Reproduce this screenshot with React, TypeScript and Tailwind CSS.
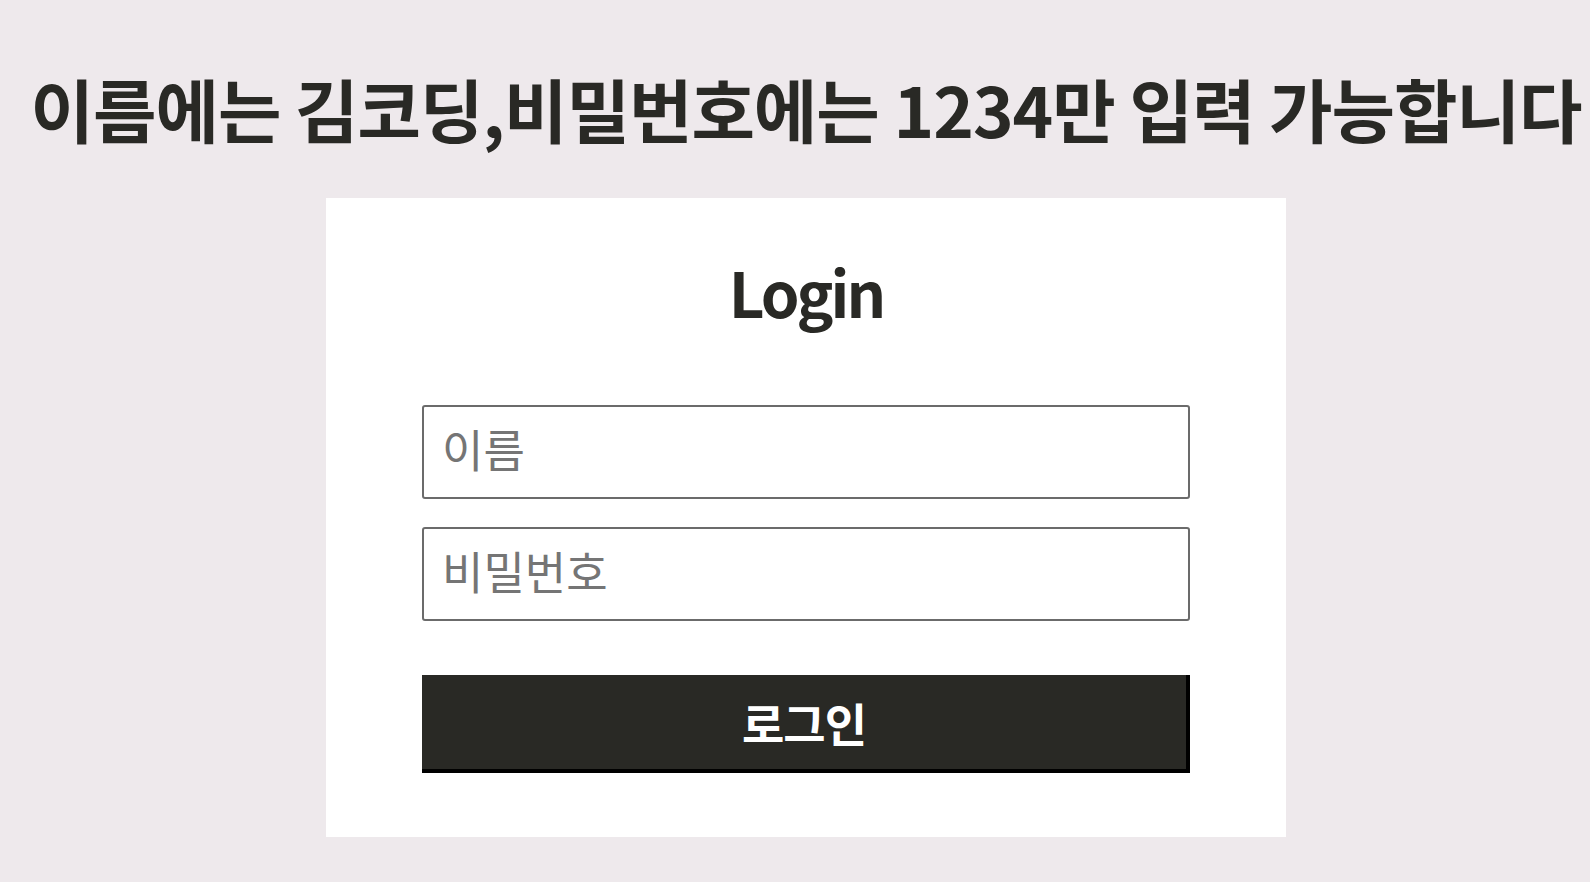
import { useState } from "react";

// login card with a hint line above it
export default function App(): JSX.Element {
  const [name, setName] = useState<string>("");
  const [password, setPassword] = useState<string>("");

  return (
    <div className="min-h-screen bg-[#eee9ec] flex flex-col items-center pl-[22px] font-['Noto_Sans_CJK_KR',sans-serif] text-[#292925]">
      <h1 className="mt-[68px] h-[80px] text-[69px] leading-[80px] font-bold tracking-[-1px] whitespace-nowrap">
        이름에는 김코딩,비밀번호에는 1234만 입력 가능합니다
      </h1>

      <div className="mt-[50px] w-[960px] bg-white px-[96px] pt-[63px] pb-[64px] flex flex-col">
        <h2 className="text-center text-[62px] leading-[60px] font-bold tracking-[-3px]">
          Login
        </h2>

        <form
          onSubmit={(e) => e.preventDefault()}
          className="mt-[84px] flex flex-col"
        >
          <input
            value={name}
            onChange={(e) => setName(e.target.value)}
            placeholder="이름"
            className="h-[94px] w-full border-2 border-[#6b6b6b] rounded-[3px] pl-[18px] pr-[20px] pb-[8px] text-[45px] outline-none placeholder:text-[#757575]"
          />
          <input
            type="password"
            value={password}
            onChange={(e) => setPassword(e.target.value)}
            placeholder="비밀번호"
            className="mt-[28px] h-[94px] w-full border-2 border-[#6b6b6b] rounded-[3px] pl-[18px] pr-[20px] pb-[8px] text-[45px] outline-none placeholder:text-[#757575]"
          />
          <button
            type="submit"
            className="mt-[54px] h-[98px] w-full bg-[#292925] border-r-4 border-b-4 border-black text-white text-[46px] font-bold tracking-[-1px] flex items-center justify-center"
          >
            로그인
          </button>
        </form>
      </div>
    </div>
  );
}
